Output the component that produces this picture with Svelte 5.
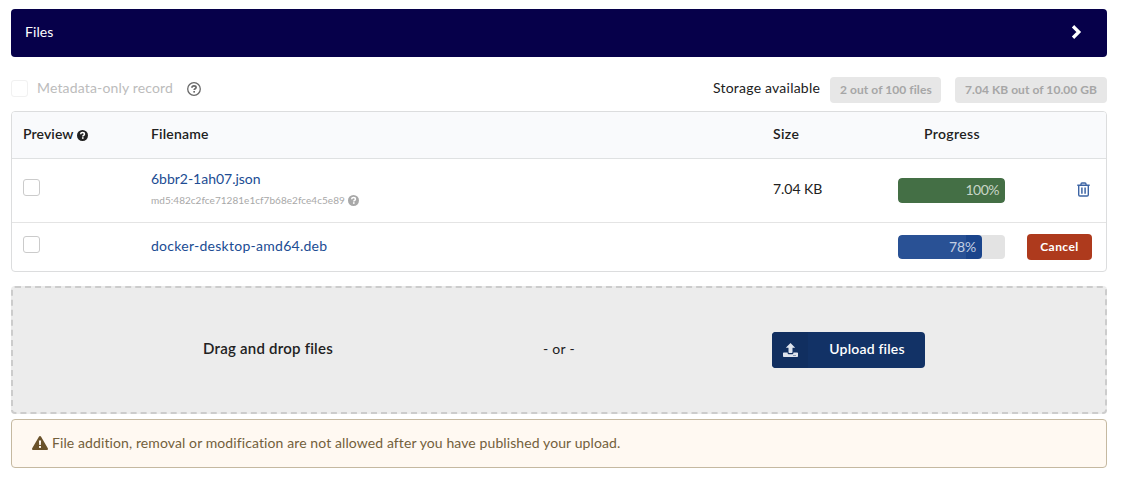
<script>
  const files = [
    { name: '6bbr2-1ah07.json', spacing: -0.02, checksum: 'md5:482c2fce71281e1cf7b68e2fce4c5e89', size: '7.04 KB', progress: 100, bar: 100, done: true },
    { name: 'docker-desktop-amd64.deb', spacing: 0.27, progress: 78, bar: 78.5, done: false }
  ];
</script>

{#snippet help()}
  <svg class="help" viewBox="0 0 16 16" aria-hidden="true">
    <circle cx="8" cy="8" r="8" fill="currentColor" />
    <path d="M5.3 6.2C5.4 4.7 6.5 3.8 8 3.8c1.7 0 2.8.9 2.8 2.2 0 1.7-2.4 1.7-2.4 3.3" fill="none" stroke="#fff" stroke-width="2.2" />
    <rect x="7.2" y="10.5" width="2.4" height="2.3" fill="#fff" />
  </svg>
{/snippet}

<main>
  <header class="title">
    <span>Files</span>
    <svg width="12" height="14" viewBox="0 0 12 14" aria-hidden="true">
      <path d="M3.2 2.400 7.800 7l-4.600 4.600" fill="none" stroke="#fff" stroke-width="3.300" stroke-linecap="square" />
    </svg>
  </header>

  <section class="toolbar">
    <span class="box faded"></span>
    <span class="meta">Metadata-only record</span>
    <svg class="outline-help" viewBox="0 0 14 14" aria-hidden="true">
      <circle cx="7" cy="7" r="6.3" fill="none" stroke="currentColor" stroke-width="1.3" />
      <path d="M4.900 5.700C5 4.500 5.800 3.900 7 3.900s2.100.6 2.100 1.600c0 1.300-1.900 1.300-1.900 2.600" fill="none" stroke="currentColor" stroke-width="1.700" />
      <rect x="6.300" y="9" width="1.700" height="1.600" fill="currentColor" />
    </svg>
    <span class="storage">Storage available</span>
    <span class="pill count">2 out of 100 files</span>
    <span class="pill bytes">7.04 KB out of 10.00 GB</span>
  </section>

  <section class="table">
    <div class="row head">
      <div class="preview">Preview {@render help()}</div>
      <div class="filename">Filename</div>
      <div class="size">Size</div>
      <div class="progress">Progress</div>
      <div></div>
    </div>
    {#each files as file}
      <div class="row" class:done={file.done} class:active={!file.done}>
        <div><span class="box"></span></div>
        <div class="file">
          <a href="#file" style="letter-spacing: {file.spacing}px">{file.name}</a>
          {#if file.checksum}
            <div class="checksum">{file.checksum} {@render help()}</div>
          {/if}
        </div>
        <div class="bytes-cell">{file.size ?? ''}</div>
        <div class="track">
          <div class="fill" style="width: {file.bar}%"><span>{file.progress}%</span></div>
        </div>
        <div class="action">
          {#if file.done}
            <svg width="13" height="15" viewBox="0 0 13 15" fill="none" stroke="#3c64a4" aria-hidden="true">
              <path d="M.3 3.2h12.4" stroke-width="1.4" />
              <path d="M4 3V1.9Q4 1 5 1h3q1 0 1 .9V3" stroke-width="1.3" />
              <path d="M1.7 3.5v9.2q0 1.3 1.2 1.3h7.2q1.200 0 1.200-1.300V3.500" stroke-width="1.400" />
              <path d="M4.900 5.500v6.300M8.100 5.500v6.300" stroke-width="1.500" />
            </svg>
          {:else}
            <button class="cancel">Cancel</button>
          {/if}
        </div>
      </div>
    {/each}
  </section>

  <section class="drop">
    <div class="drag">Drag and drop files</div>
    <div class="or">- or -</div>
    <button class="upload">
      <span class="icon">
        <svg width="15" height="14" viewBox="0 0 15 14" fill="#dfe4ed" aria-hidden="true">
          <path d="M7.500 0 12.200 4.700H9.500v4.600q0 .8-.8.8H6.300q-.8 0-.8-.8V4.700H2.800z" />
          <path d="M.8 9.500h3.800v.5q0 1.200 1.200 1.200h3.400q1.200 0 1.200-1.200v-.5h3.800q.8 0 .8.8v2.900q0 .8-.8.8H.8q-.8 0-.8-.8v-2.900q0-.8.8-.8z" />
          <path d="M10 12.500h3" fill="none" stroke="#8091ad" stroke-width=".9" />
        </svg>
      </span>
      <span class="label">Upload files</span>
    </button>
  </section>

  <section class="warning">
    <svg width="16" height="14" viewBox="0 0 16 14" aria-hidden="true">
      <path d="M8 0q.7 0 1.1.7l6.7 11.6q.3.6 0 1.1-.3.6-1 .6H1.2q-.7 0-1-.6-.3-.5 0-1.100L6.900.7Q7.300 0 8 0z" fill="#6a522a" />
      <path d="M6.900 4.600h2.200l-.3 4.500H7.200z" fill="#fff9f2" />
      <rect x="7" y="10" width="2" height="1.900" fill="#fff9f2" />
    </svg>
    <span>File addition, removal or modification are not allowed after you have published your upload.</span>
  </section>
</main>

<style>
  :global(body) { background: #fff; }
  main {
    box-sizing: border-box;
    width: 1121px;
    height: 480px;
    padding: 9px 14px 0 11px;
    font: 14px/20px Lato, "Open Sans", sans-serif;
    color: #212121;
  }
  main * { box-sizing: border-box; }
  svg { display: block; flex: none; }
  button { border: 0; padding: 0; font-family: inherit; color: #fff; }

  .title {
    display: flex;
    align-items: center;
    justify-content: space-between;
    height: 48px;
    padding: 0 24px 2px 14px;
    border-radius: 4px;
    background: #06004a;
    color: #fff;
    letter-spacing: .1px;
  }

  .toolbar { display: flex; align-items: center; height: 26px; margin: 20px 0 8px; white-space: nowrap; }
  .box { display: block; flex: none; width: 17px; height: 17px; border: 1px solid #cbcbcb; border-radius: 3px; background: #fff; }
  .faded { border-color: #f1f1f1; margin-top: -3px; }
  .meta { width: 140px; margin: -4px 0 0 9px; color: #bcbcbc; letter-spacing: .16px; }
  .outline-help { width: 14px; height: 14px; margin: -2px 0 0 10px; color: #696969; }
  .storage { margin: -4px 10px 0 auto; width: 107px; letter-spacing: .22px; }
  .pill { height: 26px; padding-left: 10px; border-radius: 4px; background: #e7e7e7; color: #a6a6a6; font-weight: 700; font-size: 12px; line-height: 26px; }
  .count { width: 111px; margin-right: 14px; letter-spacing: .07px; }
  .bytes { width: 152px; letter-spacing: .06px; }

  .table { height: 161px; border: 1px solid #dcddde; border-radius: 4px; overflow: hidden; }
  .row { display: grid; grid-template-columns: 128px 622px 125px 107px 1fr; padding: 0 14px 0 11px; }
  .head { height: 47px; align-items: center; padding-bottom: 2px; border-bottom: 1px solid #dfe1e2; background: #f9fafc; font-weight: 600; }
  .preview { display: flex; align-items: center; gap: 3px; letter-spacing: .1px; }
  .help { width: 11px; height: 11px; margin-top: 2px; }
  .filename { letter-spacing: .2px; }
  .size { letter-spacing: .4px; }
  .progress { text-align: center; letter-spacing: .35px; padding-left: 1px; }
  .done { height: 64px; padding-top: 10px; border-bottom: 1px solid #e4e4e4; }
  .active { height: 48px; padding-top: 10px; }
  .done .box { margin-top: 10px; }
  .active .box { margin-top: 3px; }
  .file a { display: block; color: #204c93; text-decoration: none; line-height: 20px; }
  .active .file a { margin-top: 3px; }
  .checksum { display: flex; align-items: center; gap: 3px; height: 20px; margin-top: 1px; color: #a8a8a8; font-size: 10px; letter-spacing: .04px; }
  .checksum .help { width: 11px; height: 11px; margin-top: 0; }
  .bytes-cell { margin-top: 10px; letter-spacing: -.05px; }
  .track { height: 25px; margin-top: 9px; border-radius: 4px; background: #e3e3e3; overflow: hidden; }
  .active .track { height: 24px; margin-top: 2px; }
  .fill { height: 100%; padding-right: 6px; border-radius: 4px; text-align: right; line-height: 24px; color: #c8d5c7; }
  .done .fill { background: #446f45; }
  .done .fill span { letter-spacing: -.5px; }
  .active .fill { background: linear-gradient(90deg, #295195 81%, #1b458c 81%); color: #c3cfe2; }
  .active .fill span { letter-spacing: -.2px; }
  .action { display: flex; justify-content: flex-end; align-items: flex-start; }
  .done .action { padding: 13px 2px 0 0; }
  .cancel { width: 65px; height: 26px; margin-top: 1px; border-radius: 4px; background: #ae3a1d; font-size: 12px; font-weight: 700; line-height: 26px; letter-spacing: .45px; }

  .drop {
    display: grid;
    grid-template-columns: 510px 72px 1fr;
    align-items: center;
    height: 128px;
    margin-top: 14px;
    border: 2px dashed #ccc;
    border-radius: 4px;
    background: #ececec;
  }
  .drag { text-align: center; font-size: 15px; font-weight: 600; letter-spacing: .22px; padding-bottom: 5px; }
  .or { text-align: center; letter-spacing: .3px; padding-bottom: 2px; }
  .upload { display: flex; align-items: center; width: 153px; height: 36px; margin-left: 177px; border-radius: 4px; background: #123266; overflow: hidden; }
  .icon { display: grid; place-items: center; width: 36px; height: 36px; background: #112f60; }
  .label { width: 117px; padding: 0 0 2px 1px; font-size: 14px; font-weight: 600; letter-spacing: .2px; line-height: 20px; }

  .warning {
    display: flex;
    align-items: center;
    gap: 4px;
    height: 49px;
    margin-top: 5px;
    padding: 0 20px 1px;
    border: 1px solid #c5b9a1;
    border-radius: 4px;
    background: #fff9f2;
    color: #73603b;
    letter-spacing: .1px;
    white-space: nowrap;
  }
</style>
